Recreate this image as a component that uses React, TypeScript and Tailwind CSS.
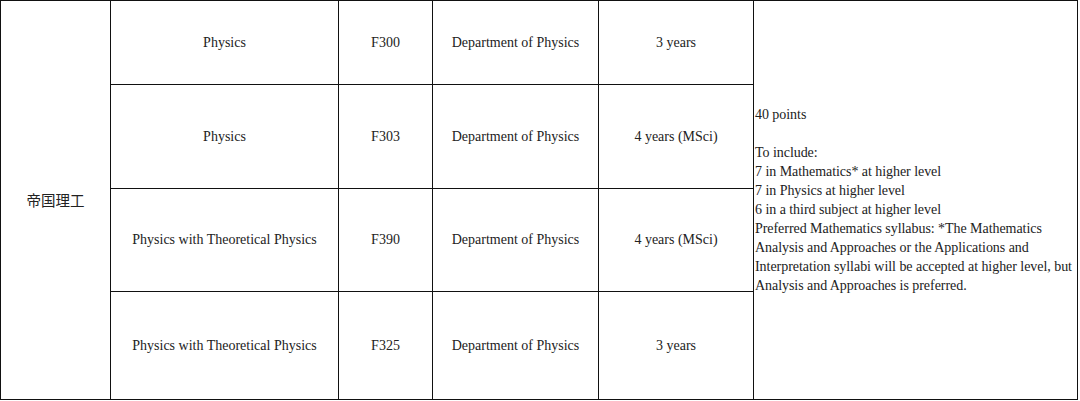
import React from "react";

const rows = [
  { name: "Physics", code: "F300", dept: "Department of Physics", dur: "3 years", h: "h-[84px]" },
  { name: "Physics", code: "F303", dept: "Department of Physics", dur: "4 years (MSci)", h: "h-[104px]" },
  { name: "Physics with Theoretical Physics", code: "F390", dept: "Department of Physics", dur: "4 years (MSci)", h: "h-[103px]" },
  { name: "Physics with Theoretical Physics", code: "F325", dept: "Department of Physics", dur: "3 years", h: "h-[108px]" },
];

export default function App() {
  const cell = "border border-[#111] text-center align-middle p-0";
  return (
    <div className="w-[1080px] h-[401px] bg-white text-[#222] text-[14px] leading-[16px] font-['Liberation_Serif','Times_New_Roman',serif]">
      <table className="table-fixed border-collapse w-[1077px]">
        <colgroup>
          <col className="w-[110px]" />
          <col className="w-[228px]" />
          <col className="w-[94px]" />
          <col className="w-[166px]" />
          <col className="w-[155px]" />
          <col className="w-[324px]" />
        </colgroup>
        <tbody>
          {rows.map((r, i) => (
            <tr key={i} className={r.h}>
              {i === 0 && (
                <td rowSpan={4} className={cell + " text-[14.5px] font-['Noto_Sans_CJK_SC','Noto_Sans',sans-serif]"}>
                  帝国理工
                </td>
              )}
              <td className={cell}>{r.name}</td>
              <td className={cell}>{r.code}</td>
              <td className={cell}>{r.dept}</td>
              <td className={cell}>{r.dur}</td>
              {i === 0 && (
                <td rowSpan={4} className="border border-[#111] align-middle text-left pl-[1px] pr-0 leading-[19px] tracking-[-0.05px]">
                  <p>40 points</p>
                  <p className="mt-[19px]">To include:</p>
                  <p>7 in Mathematics* at higher level</p>
                  <p>7 in Physics at higher level</p>
                  <p>6 in a third subject at higher level</p>
                  <p>
                    Preferred Mathematics syllabus: *The Mathematics Analysis and Approaches or the Applications and
                    Interpretation syllabi will be accepted at higher level, but Analysis and Approaches is preferred.
                  </p>
                </td>
              )}
            </tr>
          ))}
        </tbody>
      </table>
    </div>
  );
}
